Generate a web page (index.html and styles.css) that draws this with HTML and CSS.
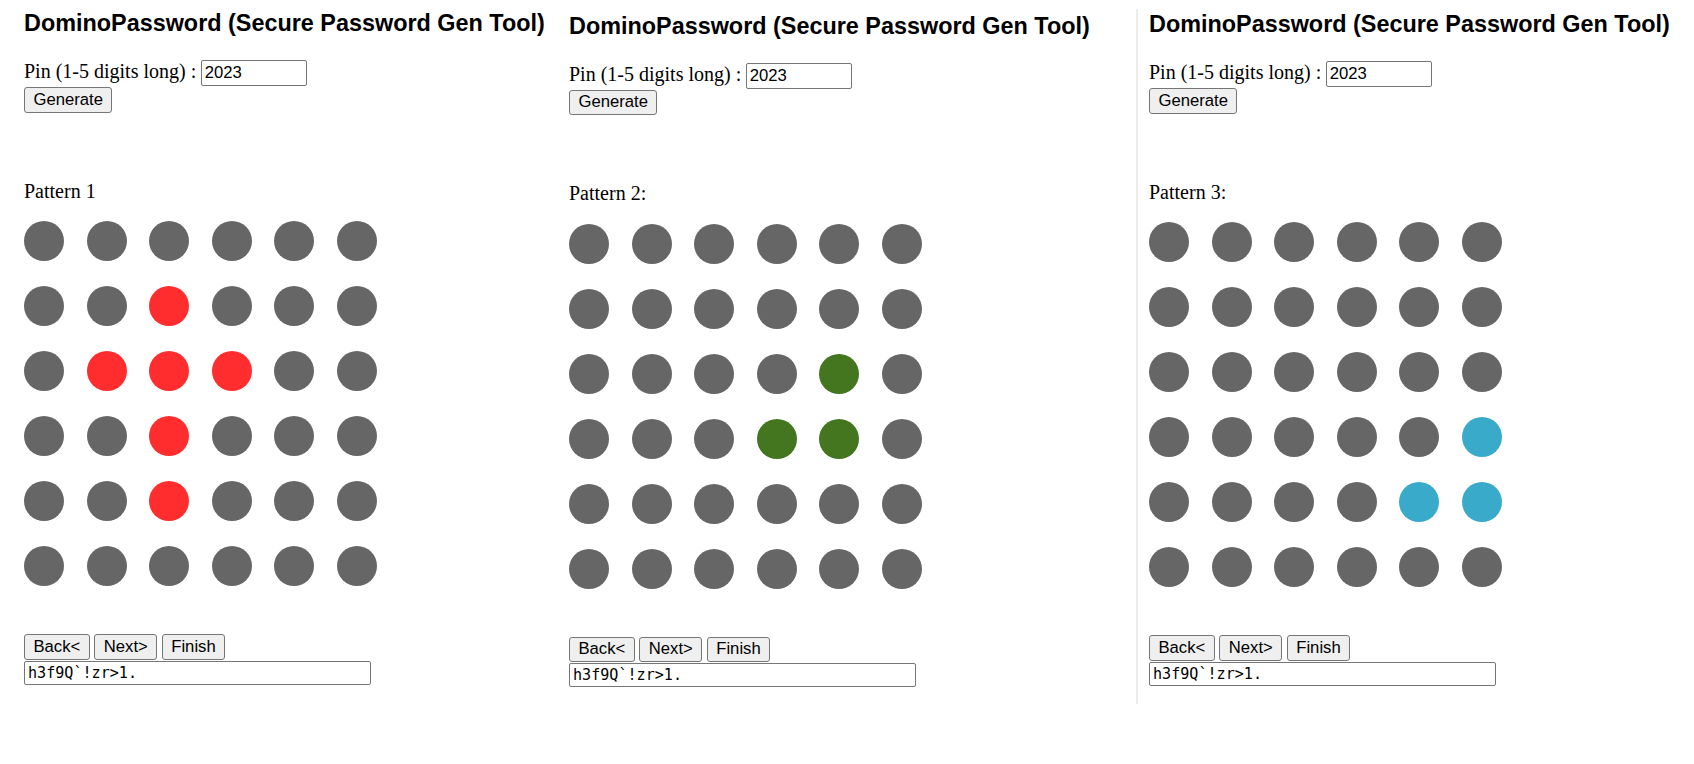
FILE: index.html
```html
<!DOCTYPE html>
<html>
<head>
<meta charset="utf-8">
<title>DominoPassword</title>
<link rel="stylesheet" href="styles.css">
</head>
<body>
<div class="screens">
  <section class="panel p1">
    <h3 class="title">DominoPassword (Secure Password Gen Tool)</h3>
    <div class="pin-row"><span class="pin-label">Pin (1-5 digits long) :</span><input class="pin" type="text" value="2023"></div>
    <div class="gen-row"><button class="btn">Generate</button></div>
    <p class="pattern-label">Pattern 1</p>
    <div class="grid">
      <i class="dot"></i><i class="dot"></i><i class="dot"></i><i class="dot"></i><i class="dot"></i><i class="dot"></i>
      <i class="dot"></i><i class="dot"></i><i class="dot red"></i><i class="dot"></i><i class="dot"></i><i class="dot"></i>
      <i class="dot"></i><i class="dot red"></i><i class="dot red"></i><i class="dot red"></i><i class="dot"></i><i class="dot"></i>
      <i class="dot"></i><i class="dot"></i><i class="dot red"></i><i class="dot"></i><i class="dot"></i><i class="dot"></i>
      <i class="dot"></i><i class="dot"></i><i class="dot red"></i><i class="dot"></i><i class="dot"></i><i class="dot"></i>
      <i class="dot"></i><i class="dot"></i><i class="dot"></i><i class="dot"></i><i class="dot"></i><i class="dot"></i>
    </div>
    <div class="nav"><button class="btn">Back&lt;</button><button class="btn">Next&gt;</button><button class="btn">Finish</button></div>
    <input class="out" type="text" value="h3f9Q`!zr&gt;1.">
  </section>
  <section class="panel p2">
    <h3 class="title">DominoPassword (Secure Password Gen Tool)</h3>
    <div class="pin-row"><span class="pin-label">Pin (1-5 digits long) :</span><input class="pin" type="text" value="2023"></div>
    <div class="gen-row"><button class="btn">Generate</button></div>
    <p class="pattern-label">Pattern 2:</p>
    <div class="grid">
      <i class="dot"></i><i class="dot"></i><i class="dot"></i><i class="dot"></i><i class="dot"></i><i class="dot"></i>
      <i class="dot"></i><i class="dot"></i><i class="dot"></i><i class="dot"></i><i class="dot"></i><i class="dot"></i>
      <i class="dot"></i><i class="dot"></i><i class="dot"></i><i class="dot"></i><i class="dot green"></i><i class="dot"></i>
      <i class="dot"></i><i class="dot"></i><i class="dot"></i><i class="dot green"></i><i class="dot green"></i><i class="dot"></i>
      <i class="dot"></i><i class="dot"></i><i class="dot"></i><i class="dot"></i><i class="dot"></i><i class="dot"></i>
      <i class="dot"></i><i class="dot"></i><i class="dot"></i><i class="dot"></i><i class="dot"></i><i class="dot"></i>
    </div>
    <div class="nav"><button class="btn">Back&lt;</button><button class="btn">Next&gt;</button><button class="btn">Finish</button></div>
    <input class="out" type="text" value="h3f9Q`!zr&gt;1.">
  </section>
  <section class="panel p3">
    <h3 class="title">DominoPassword (Secure Password Gen Tool)</h3>
    <div class="pin-row"><span class="pin-label">Pin (1-5 digits long) :</span><input class="pin" type="text" value="2023"></div>
    <div class="gen-row"><button class="btn">Generate</button></div>
    <p class="pattern-label">Pattern 3:</p>
    <div class="grid">
      <i class="dot"></i><i class="dot"></i><i class="dot"></i><i class="dot"></i><i class="dot"></i><i class="dot"></i>
      <i class="dot"></i><i class="dot"></i><i class="dot"></i><i class="dot"></i><i class="dot"></i><i class="dot"></i>
      <i class="dot"></i><i class="dot"></i><i class="dot"></i><i class="dot"></i><i class="dot"></i><i class="dot"></i>
      <i class="dot"></i><i class="dot"></i><i class="dot"></i><i class="dot"></i><i class="dot"></i><i class="dot blue"></i>
      <i class="dot"></i><i class="dot"></i><i class="dot"></i><i class="dot"></i><i class="dot blue"></i><i class="dot blue"></i>
      <i class="dot"></i><i class="dot"></i><i class="dot"></i><i class="dot"></i><i class="dot"></i><i class="dot"></i>
    </div>
    <div class="nav"><button class="btn">Back&lt;</button><button class="btn">Next&gt;</button><button class="btn">Finish</button></div>
    <input class="out" type="text" value="h3f9Q`!zr&gt;1.">
  </section>
</div>
</body>
</html>
```
FILE: styles.css
```css
html, body {
  margin: 0;
  padding: 0;
  background: #ffffff;
}

body {
  font-family: "Liberation Serif", "Times New Roman", serif;
  font-size: 20px;
  color: #000;
}

.screens {
  display: flex;
  align-items: flex-start;
}

.panel {
  box-sizing: border-box;
  display: flex;
  flex-direction: column;
  align-items: flex-start;
}

.p1 {
  width: 545px;
  padding: 10px 0 0 24px;
}

.p2 {
  width: 591px;
  padding: 12.5px 0 0 24px;
}

.p3 {
  width: 558px;
  margin-top: 9px;
  height: 695px;
  border-left: 2px solid #ececec;
  padding: 2px 0 0 11px;
}

.title {
  margin: 0;
  font-family: "Liberation Sans", Arial, sans-serif;
  font-weight: bold;
  font-size: 23.4px;
  line-height: 27px;
  white-space: nowrap;
}

.pin-row {
  margin-top: 23px;
  line-height: 23px;
  height: 26px;
  display: flex;
  align-items: baseline;
}

.pin-label {
  white-space: pre;
  margin-right: 5px;
}

.pin {
  box-sizing: border-box;
  width: 106px;
  height: 26px;
  margin: 0;
  padding: 0 2.5px;
  border: 1px solid #767676;
  border-radius: 2px;
  font-family: "Liberation Sans", Arial, sans-serif;
  font-size: 16.67px;
  color: #000;
  background: #fff;
  outline: none;
}

.gen-row {
  margin-top: 1px;
  display: flex;
}

.btn {
  box-sizing: border-box;
  height: 25.5px;
  margin: 0;
  padding: 0 8.5px;
  border: 1px solid #767676;
  border-radius: 3px;
  background: #efefef;
  font-family: "Liberation Sans", Arial, sans-serif;
  font-size: 16.67px;
  line-height: 22px;
  color: #000;
}

.pattern-label {
  margin: 67px 0 0 0;
  line-height: 23px;
  height: 23px;
}

.grid {
  margin-top: 18.5px;
  display: grid;
  grid-template-columns: repeat(6, 40px);
  grid-auto-rows: 40px;
  column-gap: 22.6px;
  row-gap: 25px;
}

.dot {
  display: block;
  width: 40px;
  height: 40px;
  border-radius: 50%;
  background: #666666;
}

.dot.red { background: #ff2d2d; }
.dot.green { background: #43761f; }
.dot.blue { background: #3aaacb; }

.nav {
  margin-top: 48px;
  display: flex;
  gap: 4.5px;
}

.out {
  box-sizing: border-box;
  width: 347px;
  height: 24px;
  margin: 1px 0 0 0;
  padding: 0 3px;
  border: 1px solid #767676;
  border-radius: 2px;
  font-family: "DejaVu Sans Mono", "Liberation Mono", monospace;
  font-size: 15.1px;
  color: #000;
  background: #fff;
  outline: none;
}
```
